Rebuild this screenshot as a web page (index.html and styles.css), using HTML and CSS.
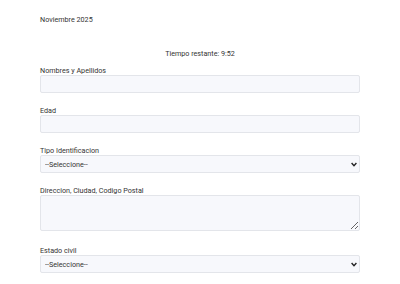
FILE: index.html
```html
<!DOCTYPE html>
<html lang="es">
<head>
  <meta charset="UTF-8">
  <meta name="viewport" content="width=device-width, initial-scale=1.0">
  <title>Formulario</title>
  <link rel="stylesheet" href="styles.css">
</head>
<body>
  <main class="page">
    <p class="month">Noviembre 2025</p>
    <p class="timer">Tiempo restante: 9:52</p>

    <!-- Datos del formulario -->
    <form class="form">
      <div class="field">
        <label for="nombres">Nombres y Apellidos</label>
        <input type="text" id="nombres">
      </div>
      <div class="field">
        <label for="edad">Edad</label>
        <input type="text" id="edad">
      </div>
      <div class="field">
        <label for="tipo">Tipo Identificacion</label>
        <div class="select-wrap">
          <select id="tipo">
            <option>--Seleccione--</option>
          </select>
          <svg class="chevron" width="6" height="5" viewBox="0 0 6 5"><path d="M0.6 1 L3 3.6 L5.4 1" fill="none" stroke="#222" stroke-width="1.4"/></svg>
        </div>
      </div>
      <div class="field field-area">
        <label for="direccion">Direccion, Ciudad, Codigo Postal</label>
        <textarea id="direccion"></textarea>
      </div>
      <div class="field">
        <label for="estado">Estado civil</label>
        <div class="select-wrap">
          <select id="estado">
            <option>--Seleccione--</option>
          </select>
          <svg class="chevron" width="6" height="5" viewBox="0 0 6 5"><path d="M0.6 1 L3 3.6 L5.4 1" fill="none" stroke="#222" stroke-width="1.4"/></svg>
        </div>
      </div>
    </form>
  </main>
</body>
</html>
```

FILE: styles.css
```css
/* Pagina */
body {
  margin: 0;
  font-family: Roboto, "Liberation Sans", Arial, sans-serif;
  font-size: 7.2px;
  color: #333;
  background: #fff;
}

.page {
  width: 320px;
  margin: 0 auto;
  padding-top: 15px;
}

.month {
  margin: 0;
  line-height: 9px;
}

.timer {
  margin: 25px 0 0;
  text-align: center;
  line-height: 9px;
}

.form {
  margin-top: 9px;
}

.field {
  margin-bottom: 14px;
}

.field-area {
  margin-bottom: 16px;
}

.field label {
  display: block;
  line-height: 8px;
}

.field input,
.field select,
.field textarea {
  display: block;
  box-sizing: border-box;
  width: 100%;
  height: 18px;
  margin: 0;
  padding: 0 4px;
  font-family: inherit;
  font-size: 7.2px;
  color: #333;
  background: #f7f8fc;
  border: 1px solid #e3e5ea;
  border-radius: 2px;
}

.field select {
  appearance: none;
  -webkit-appearance: none;
}

.field textarea {
  height: 36px;
}

/* flecha del select */
.select-wrap {
  position: relative;
}

.chevron {
  position: absolute;
  right: 3px;
  top: 7px;
  pointer-events: none;
}
```
